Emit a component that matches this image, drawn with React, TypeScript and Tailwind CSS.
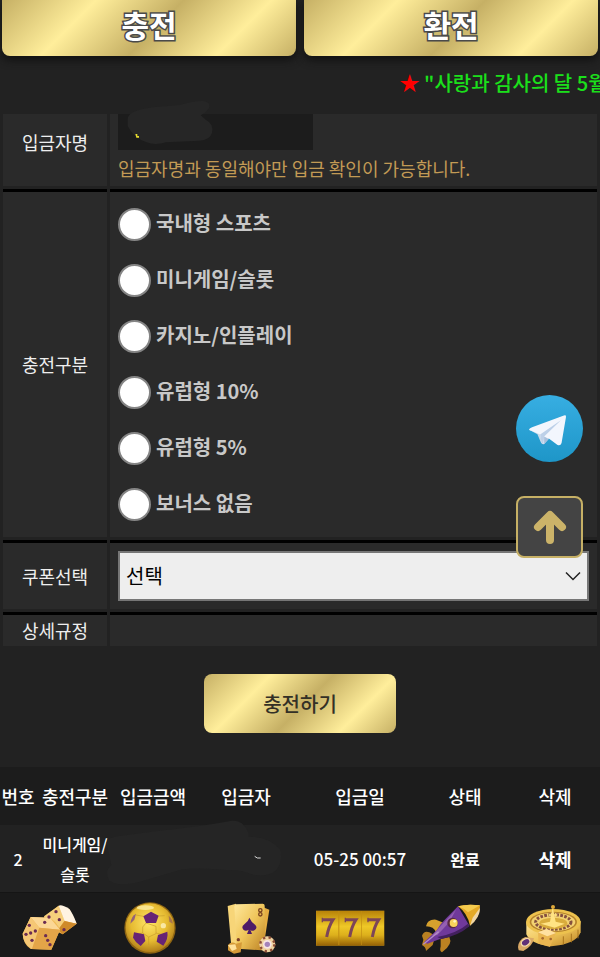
import { useState } from "react";
import type { ReactNode } from "react";

const chargeTypes = [
  "국내형 스포츠",
  "미니게임/슬롯",
  "카지노/인플레이",
  "유럽형 10%",
  "유럽형 5%",
  "보너스 없음",
];

const goldStyles =
  "bg-[linear-gradient(135deg,#c6b065_0%,#ffee9b_27%,#c6b065_52%,#ffee9b_77%,#c6b065_100%)]";

const TabButton = ({ text }: { text: string }) => (
  <button
    className={`h-14 flex-1 rounded-b-lg pb-2 text-3xl font-bold text-white shadow-[0_4px_8px_#111] [paint-order:stroke_fill] [-webkit-text-stroke:3px_#4a4a4a] ${goldStyles}`}
  >
    {text}
  </button>
);

const FormRow = ({
  label,
  first,
  children,
}: {
  label: ReactNode;
  first?: boolean;
  children?: ReactNode;
}) => {
  const border = first ? "" : "border-t-3 border-black";
  return (
    <div className="flex gap-[3px]">
      <div
        className={`flex w-[104px] shrink-0 items-center justify-center bg-[#2a2a2a] text-lg leading-[31px] text-[#eee] ${border}`}
      >
        {label}
      </div>
      <div className={`min-w-0 flex-1 bg-[#2a2a2a] px-2 ${border}`}>{children}</div>
    </div>
  );
};

const DiceIcon = () => (
  <>
    <path d="M132 78L176 44L208 54L230 98L188 130L150 112Z" fill="#e9b04a" />
    <path d="M132 76L176 44L194 88L178 112L140 96Z" fill="#f6cf7c" />
    <path d="M176 44Q186 40 208 54Q218 66 230 98L194 90Z" fill="#fff3e2" />
    <path d="M194 90L230 98L188 130L174 116Z" fill="#cf8a2b" />
    <path d="M92 78L146 80Q168 88 180 116L154 176L92 174Q70 160 68 128Z" fill="#f0b955" />
    <path d="M92 78L150 80L180 116L118 110Z" fill="#fbd795" />
    <path d="M92 78L118 110L96 174Q68 156 68 128Z" fill="#f5c775" />
    <path d="M118 110L180 116L154 176L96 174Z" fill="#e3a548" />
    {[
      [168, 62], [147, 78], [178, 86], [192, 116], [88, 103], [78, 130], [92, 126],
      [106, 120], [96, 148], [137, 134], [143, 148], [150, 161], [134, 94],
    ].map(([x, y]) => (
      <circle key={`${x}-${y}`} cx={x} cy={y} r="5" fill="#6b2c52" />
    ))}
  </>
);

const BallIcon = () => (
  <>
    <circle cx="150" cy="111" r="77" fill="#8e6512" />
    <circle cx="150" cy="110" r="73" fill="url(#ball)" />
    <g stroke="#c79d2a" strokeWidth="2" fill="none">
      <path d="M138 96L128 108V126L146 138L168 128V106Z" />
      <path d="M128 126L118 128M168 126L184 130M130 76L108 72M176 75L194 74" />
      <path d="M146 138V162" />
    </g>
    <path d="M153 62L176 74L168 96H138L130 76Z" fill="#672475" />
    <path d="M102 124L132 130L136 150L122 165Q106 154 99 140Z" fill="#672475" />
    <path d="M174 132L202 122Q206 142 190 164L170 152Z" fill="#672475" />
    <path d="M91 98Q94 74 108 68L103 86Z" fill="#93627a" />
    <path d="M206 74Q218 84 218 98L208 92Z" fill="#a9754d" />
    <ellipse cx="136" cy="50" rx="26" ry="7" fill="#fff3b4" opacity=".7" />
    <circle cx="190" cy="104" r="8" fill="#fff8cf" opacity=".7" />
  </>
);

const CardsIcon = () => (
  <>
    <path d="M83 45L108 38L120 160L94 166Z" fill="#f7d578" />
    <path d="M188 48L208 56L190 172L160 168Z" fill="#e4ad42" />
    <path d="M108 40L188 38Q194 38 194 44L195 168Q194 178 184 178L124 174Q110 172 110 162L103 46Z" fill="url(#gold)" />
    <path d="M148 80Q154 94 166 102Q174 112 163 118Q156 122 151 116L156 129H141L146 116Q138 122 131 117Q122 108 133 100Q145 92 148 80Z" fill="#4e1b68" />
    <circle cx="181" cy="58" r="5" fill="none" stroke="#79411e" strokeWidth="4" />
    <circle cx="181" cy="70" r="5" fill="none" stroke="#79411e" strokeWidth="4" />
    <circle cx="115" cy="146" r="5" fill="#7d3f2b" />
    <path d="M84 162Q94 150 108 158L126 154L122 184L102 188L84 178Z" fill="#d59a38" />
    <path d="M84 162L106 160L110 174L96 180Z" fill="#ffe19a" />
    <circle cx="202" cy="160" r="24" fill="#efd2a0" />
    <circle cx="202" cy="160" r="21" fill="none" stroke="#8b4b35" strokeWidth="7" strokeDasharray="7 10" />
    <circle cx="202" cy="160" r="13" fill="#f7e4e4" />
    <circle cx="202" cy="160" r="8" fill="#a483ba" />
  </>
);

const SevensIcon = () => (
  <>
    <rect x="48" y="59" width="205" height="105" fill="#c28d12" />
    {[49, 118, 186].map((x) => (
      <g key={x}>
        <rect x={x} y="60" width="66" height="103" fill="url(#reel)" />
        <path d={`M${x + 17} 86H${x + 50}Q${x + 37} 106 ${x + 31} 138`} fill="none" stroke="#7d4658" strokeWidth="9" />
        <path d={`M${x + 18} 80V94`} stroke="#7d4658" strokeWidth="4" />
      </g>
    ))}
  </>
);

const RocketIcon = () => (
  <>
    <path d="M78 106Q82 84 108 86L132 96L108 124Q102 106 78 106Z" fill="#d6a02d" />
    <path d="M122 144L148 138Q160 160 126 184Q118 182 122 166Z" fill="#bd8222" />
    <path d="M66 134Q72 118 88 124L106 134L98 162L78 180Q78 168 66 162L70 146Z" fill="#b98022" />
    <path d="M72 154L110 118Q122 96 140 80L174 46L208 104Q180 126 136 138L82 158Z" fill="#70399a" />
    <path d="M96 134L128 98L168 56L146 96L112 132Z" fill="#9560b2" />
    <path d="M112 138Q172 126 204 98L208 106Q176 134 124 144Z" fill="#43205f" />
    <path d="M174 46Q200 38 240 43Q242 76 210 104Q202 66 174 46Z" fill="#e4a926" />
    <path d="M174 46Q200 38 240 43L204 64Q192 52 174 46Z" fill="#f5cb4e" />
    <path d="M240 50Q240 80 210 104L218 80Z" fill="#efd6a5" />
    <circle cx="158" cy="96" r="16" fill="#5a2944" />
    <circle cx="161" cy="96" r="12" fill="#f8d35c" />
    <circle cx="164" cy="91" r="4" fill="#fff4bd" />
    <path d="M70 160L116 122" stroke="#b48cc8" strokeWidth="4" />
  </>
);

const RouletteIcon = () => (
  <>
    <path d="M79 94V130Q92 160 154 166Q228 160 242 124V90Z" fill="url(#gold)" />
    <path d="M190 136V160M214 128V154M234 116V142" stroke="#a8741c" strokeWidth="3" />
    <ellipse cx="160" cy="93" rx="82" ry="39" fill="#edc24e" />
    <ellipse cx="160" cy="93" rx="71" ry="31" fill="#b5822c" />
    <ellipse cx="160" cy="93" rx="66" ry="28" fill="#f3d272" />
    <ellipse cx="160" cy="93" rx="53" ry="22" fill="none" stroke="#85503f" strokeWidth="9" strokeDasharray="8 4" />
    <ellipse cx="160" cy="97" rx="42" ry="17" fill="#d9ac3c" />
    <path d="M122 98L150 92L158 48L167 92L194 98L164 110Z" fill="#ffe384" />
    <circle cx="159" cy="48" r="6" fill="#dfa939" />
    <path d="M146 72H172" stroke="#ffe384" strokeWidth="5" />
    <path d="M114 124L140 114L168 126L150 168L116 158Z" fill="#eab651" />
    <path d="M114 124L140 114L168 126L142 136Z" fill="#ffe0a0" />
    <circle cx="128" cy="142" r="4" fill="#a5682e" />
    <circle cx="152" cy="144" r="4" fill="#a5682e" />
    <path d="M54 168Q56 146 76 138L102 142Q98 166 70 180L56 178Z" fill="#d9a865" />
    <ellipse cx="77" cy="154" rx="14" ry="10" transform="rotate(-30 77 154)" fill="#613078" stroke="#f6dcaa" strokeWidth="4" />
  </>
);

const menu = [
  { name: "미니게임", icon: <DiceIcon /> },
  { name: "스포츠", icon: <BallIcon /> },
  { name: "카지노", icon: <CardsIcon /> },
  { name: "슬롯", icon: <SevensIcon /> },
  { name: "인플레이", icon: <RocketIcon /> },
  { name: "룰렛", icon: <RouletteIcon /> },
];

const Defs = () => (
  <svg className="absolute size-0" aria-hidden="true">
    <defs>
      <linearGradient id="gold" x1="0" y1="0" x2="1" y2="1">
        <stop offset="0" stopColor="#ffe89d" />
        <stop offset=".5" stopColor="#efc55a" />
        <stop offset="1" stopColor="#bb8124" />
      </linearGradient>
      <linearGradient id="reel" x1="0" y1="0" x2="0" y2="1">
        <stop offset="0" stopColor="#b88309" />
        <stop offset=".45" stopColor="#efc827" />
        <stop offset=".7" stopColor="#ddb01c" />
        <stop offset="1" stopColor="#986306" />
      </linearGradient>
      <radialGradient id="ball" cx=".48" cy=".4" r=".62">
        <stop offset="0" stopColor="#ffe768" />
        <stop offset=".6" stopColor="#e6bb31" />
        <stop offset="1" stopColor="#ad7a18" />
      </radialGradient>
      <linearGradient id="sky" x1="0" y1="0" x2="0" y2="1">
        <stop offset="0" stopColor="#37aee2" />
        <stop offset="1" stopColor="#1e96c8" />
      </linearGradient>
    </defs>
  </svg>
);

const App = () => {
  const [chargeType, setChargeType] = useState("");

  return (
    <div className="min-h-screen overflow-hidden bg-[#222] font-['Noto_Sans_CJK_KR',sans-serif] text-white">
      <Defs />
      <header className="flex gap-2 px-[2px]">
        <TabButton text="충전" />
        <TabButton text="환전" />
      </header>

      {/* scrolling notice, runs past the right edge */}
      <p className="h-[58px] overflow-hidden pl-[66.6%] text-xl leading-[54px] font-medium whitespace-nowrap text-[#1be01b]">
        <span className="text-[#f00]">★</span> "사랑과 감사의 달 5월
      </p>

      <main>
        <form onSubmit={(e) => e.preventDefault()}>
          <div className="flex flex-col gap-[3px] px-[3px]">
            <FormRow first label={<label htmlFor="depositor" className="-mt-4">입금자명</label>}>
              <div className="relative">
                <input
                  id="depositor"
                  className="block h-9 w-[195px] max-w-full bg-[#1c1c1c] px-3 text-lg text-[#f2e33c] outline-none"
                />
                <svg className="absolute -top-[14px] left-2 h-[46px] w-[88px]" viewBox="0 0 264 138" aria-hidden="true">
                  <path
                    d="M5 58Q4 32 80 22L160 15Q205 2 232 3Q254 6 250 22Q246 34 224 46L240 60Q264 72 258 98Q252 120 220 122L120 127Q86 138 60 126Q24 114 5 78Z"
                    fill="#262626"
                  />
                  <path d="M28 102h6v6h5v5h-8z" fill="#e6dc2e" />
                </svg>
              </div>
              <p className="h-9 text-lg leading-9 text-[#c29a55]">
                입금자명과 동일해야만 입금 확인이 가능합니다.
              </p>
            </FormRow>

            <FormRow label={<span id="charge-type">충전구분</span>}>
              <div role="radiogroup" aria-labelledby="charge-type" className="pt-1 pb-[5px]">
                {chargeTypes.map((type) => (
                  <label
                    key={type}
                    className="flex h-14 w-fit items-center gap-[5px] text-xl font-bold text-[#c8c8c8]"
                  >
                    <input
                      type="radio"
                      name="chargeType"
                      checked={chargeType === type}
                      onChange={() => setChargeType(type)}
                      className="size-[33px] appearance-none rounded-full border-2 border-[#858585] bg-white checked:border-8 checked:border-[#c6b065]"
                    />
                    <span className="pb-[2px]">{type}</span>
                  </label>
                ))}
              </div>
            </FormRow>

            <FormRow label={<label htmlFor="coupon">쿠폰선택</label>}>
              <div className="relative py-2">
                <select
                  id="coupon"
                  className="block h-[50px] w-full appearance-none border-2 border-[#767676] bg-[#eee] px-[6px] text-xl text-black"
                >
                  <option>선택</option>
                </select>
                <svg
                  className="pointer-events-none absolute top-[25px] right-2 h-4 w-4"
                  viewBox="0 0 16 16"
                  fill="none"
                  stroke="#222"
                  strokeWidth="1.5"
                >
                  <path d="M1 4.500L8 11.500L15 4.500" />
                </svg>
              </div>
            </FormRow>

            <FormRow label="상세규정" />
          </div>

          <button
            type="submit"
            className={`mx-auto mt-7 block h-[59px] w-48 rounded-lg text-xl font-medium text-[#333026] ${goldStyles}`}
          >
            충전하기
          </button>
        </form>

        <section className="relative mt-[34px]">
          <table className="w-full table-fixed text-center font-medium">
            <colgroup>
              <col className="w-[6%]" />
              <col className="w-[13%]" />
              <col className="w-[13%]" />
              <col className="w-[18%]" />
              <col className="w-[20%]" />
              <col className="w-[15%]" />
              <col className="w-[15%]" />
            </colgroup>
            <thead className="bg-[#1c1c1c] text-lg whitespace-nowrap">
              <tr className="h-[58px]">
                {["번호", "충전구분", "입금금액", "입금자", "입금일", "상태", "삭제"].map((title) => (
                  <th key={title} className="p-0 font-medium">
                    {title}
                  </th>
                ))}
              </tr>
            </thead>
            <tbody>
              <tr className="h-[67px] text-base">
                <td>2</td>
                <td className="leading-[30px]">
                  미니게임/
                  <br />
                  슬롯
                </td>
                <td></td>
                <td></td>
                <td className="text-[17px] whitespace-nowrap">05-25 00:57</td>
                <td className="font-bold">완료</td>
                <td>
                  <button className="text-lg font-bold">삭제</button>
                </td>
              </tr>
            </tbody>
          </table>
          <svg className="absolute top-[53px] left-[17.667%] h-[66px] w-[176px]" viewBox="0 0 528 198" aria-hidden="true">
            <path
              d="M2 68Q4 52 40 48L160 32Q280 20 378 2Q408 0 424 30Q430 44 428 50Q490 50 522 88Q532 124 510 152Q470 178 424 158Q400 148 360 150Q280 142 230 148L100 186Q40 202 10 182Q-6 152 16 136Z"
              fill="#252525"
            />
            <path d="M446 109l8 5h10" stroke="#ddd" strokeWidth="3" fill="none" />
          </svg>
        </section>
      </main>

      <nav className="flex border-t border-[#151515] bg-[#1a1a1a]">
        {menu.map(({ name, icon }) => (
          <a key={name} href="#" aria-label={name} className="flex-1">
            <svg className="h-[65px] w-full" viewBox="0 6 300 195" aria-hidden="true">
              {icon}
            </svg>
          </a>
        ))}
      </nav>

      <div className="fixed top-[395px] right-[17px] flex flex-col gap-[34px]">
        <a href="#" aria-label="Telegram">
          <svg className="size-[67px]" viewBox="0 0 200 200">
            <circle cx="100" cy="100" r="100" fill="url(#sky)" />
            <path d="M39 104L148 61L76 120L84 147L78 146Q75 145 73 139L64 117Z" fill="#c8daea" />
            <path d="M39 102Q41 99 48 96L143 61Q151 58 149 67L136 143Q133 153 124 149L98 130L84 146L78 144L72 118L46 107Q39 105 39 102Z" fill="#f3f6fd" />
            <path d="M72 118L134 75L84 124L82 147Q78 146 76 140Z" fill="#bdd0e8" />
            <path d="M84 124L98 131L84 147Z" fill="#a8c0dc" />
          </svg>
        </a>
        <button
          aria-label="위로"
          className="flex h-[62px] w-[67px] items-center justify-center rounded-lg border-2 border-[#c6b065] bg-[#444]"
        >
          <svg className="h-[36px] w-[36px]" viewBox="0 0 36 36" fill="none" stroke="#cbb369" strokeWidth="8" strokeLinecap="round" strokeLinejoin="round">
            <path d="M18 31V8M6 18L18 6L30 18" />
          </svg>
        </button>
      </div>
    </div>
  );
};

export default App;
